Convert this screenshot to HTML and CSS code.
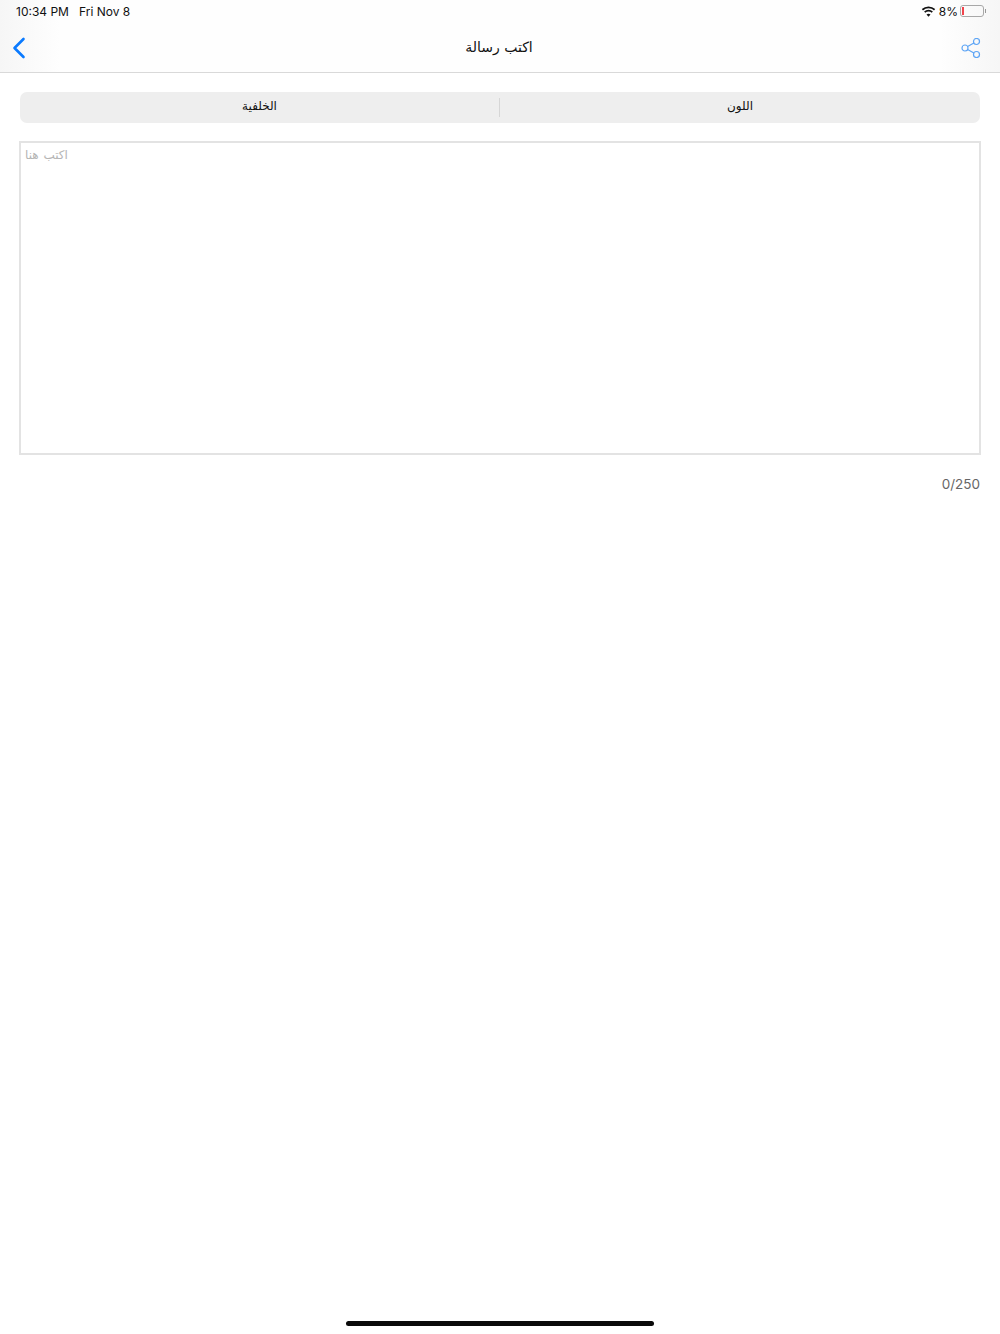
FILE: index.html
```html
<!DOCTYPE html>
<html lang="ar">
<head>
    <meta charset="UTF-8">
    <meta name="viewport" content="width=device-width, initial-scale=1.0">
    <title>اكتب رسالة</title>
    <link rel="stylesheet" href="styles.css">
</head>
<body>
    <div class="page">
        <header class="top">
            <div class="status">
                <div class="status-time">
                    <span>10:34 PM</span>
                    <span>Fri Nov 8</span>
                </div>
                <div class="status-right">
                    <svg class="wifi" width="15" height="11" viewBox="0 0 15 11">
                        <path d="M7.5 2.3c2.1 0 4 .8 5.5 2.1l1.2-1.3A9.900 9.900 0 0 0 7.500.4 9.900 9.900 0 0 0 .8 3.100L2 4.400a8.200 8.200 0 0 1 5.500-2.100z" fill="#111"/>
                        <path d="M7.500 5.500c1.200 0 2.300.4 3.200 1.200l1.200-1.300a6.500 6.500 0 0 0-8.800 0l1.200 1.300c.9-.8 2-1.200 3.200-1.200z" fill="#111"/>
                        <path d="M7.500 10.800l2-2.200a2.900 2.900 0 0 0-4 0z" fill="#111"/>
                    </svg>
                    <span class="battery-text">8%</span>
                    <div class="battery">
                        <div class="battery-level"></div>
                    </div>
                    <div class="battery-tip"></div>
                </div>
            </div>
            <nav class="nav">
                <button class="nav-btn">
                    <svg width="14" height="22" viewBox="0 0 14 22">
                        <path d="M11.500 2L2.500 11l9 9" fill="none" stroke="#0a7aff" stroke-width="2.600" stroke-linecap="round" stroke-linejoin="round"/>
                    </svg>
                </button>
                <h1 class="nav-title">اكتب رسالة</h1>
                <button class="nav-btn nav-btn-right">
                    <svg width="20" height="20" viewBox="0 0 20 20">
                        <g fill="none" stroke="#5ea5f5" stroke-width="1.200">
                            <circle cx="4" cy="10" r="3"/>
                            <circle cx="15.500" cy="3.500" r="3"/>
                            <circle cx="15.500" cy="16.500" r="3"/>
                            <path d="M6.600 8.500l6.300-3.500M6.600 11.500l6.300 3.500"/>
                        </g>
                    </svg>
                </button>
            </nav>
        </header>
        <main class="content">
            <div class="segments">
                <div class="segment segment-left">الخلفية</div>
                <div class="segment">اللون</div>
            </div>
            <div class="message-box">اكتب هنا</div>
            <div class="counter">0/250</div>
        </main>
        <div class="home-bar"></div>
    </div>
</body>
</html>
```

FILE: styles.css
```css
* {
    margin: 0;
    padding: 0;
    box-sizing: border-box;
}
body {
    background: #fff;
    font-family: "Liberation Sans", "DejaVu Sans", sans-serif;
    color: #111;
}
.page {
    height: 1334px;
    display: flex;
    flex-direction: column;
}
.top {
    height: 73px;
    border-bottom: 1px solid #d9d9d9;
    background: linear-gradient(90deg, #f6f6f6, #fefefe 6%, #fefefe 94%, #f6f6f6);
}
.status {
    height: 24px;
    padding: 0 14px 2px 16px;
    display: flex;
    align-items: center;
    justify-content: space-between;
}
.status-time {
    display: flex;
    gap: 10px;
    font-family: Inter, sans-serif;
    font-size: 12px;
}
.status-right {
    display: flex;
    align-items: center;
}
.wifi {
    margin-right: 3px;
}
.battery-text {
    font-family: Inter, sans-serif;
    font-size: 12px;
    margin-right: 2px;
}
.battery {
    width: 24px;
    height: 12px;
    border: 1px solid #a8a8a8;
    border-radius: 3px;
    padding: 1px;
}
.battery-level {
    width: 2px;
    height: 100%;
    background: #f0444c;
}
.battery-tip {
    width: 1px;
    height: 4px;
    margin-left: 1px;
    background: #999;
}
.nav {
    height: 48px;
    padding: 0 19px 0 12px;
    display: flex;
    align-items: center;
    justify-content: space-between;
}
.nav-btn {
    width: 21px;
    border: 0;
    background: none;
    display: flex;
}
.nav-btn-right {
    justify-content: flex-end;
}
.nav-title {
    font-family: "DejaVu Sans", sans-serif;
    font-size: 14px;
    font-weight: 400;
    padding: 0 0 2px 5px;
}
.content {
    flex: 1;
    padding: 19px 19px 0;
}
.segments {
    height: 31px;
    margin: 0 1px;
    background: #eeeeee;
    border-radius: 7px;
    display: flex;
    align-items: center;
}
.segment {
    flex: 0 0 50%;
    height: 19px;
    padding-bottom: 4px;
    display: flex;
    align-items: center;
    justify-content: center;
    font-family: "DejaVu Sans", sans-serif;
    font-size: 12px;
}
.segment-left {
    border-right: 1px solid #d6d6d6;
}
.message-box {
    height: 314px;
    margin-top: 18px;
    border: 2px solid #e3e3e3;
    padding: 5px 4px;
    font-family: "DejaVu Sans", sans-serif;
    font-size: 12px;
    word-spacing: 1px;
    color: #b5b5b5;
    direction: rtl;
    text-align: left;
}
.counter {
    margin-top: 21px;
    text-align: right;
    font-family: Inter, sans-serif;
    font-size: 13.5px;
    color: #666;
    padding-right: 1px;
}
.home-bar {
    width: 308px;
    height: 5px;
    margin: 0 auto 8px;
    border-radius: 3px;
    background: #0a0a0a;
}
```
